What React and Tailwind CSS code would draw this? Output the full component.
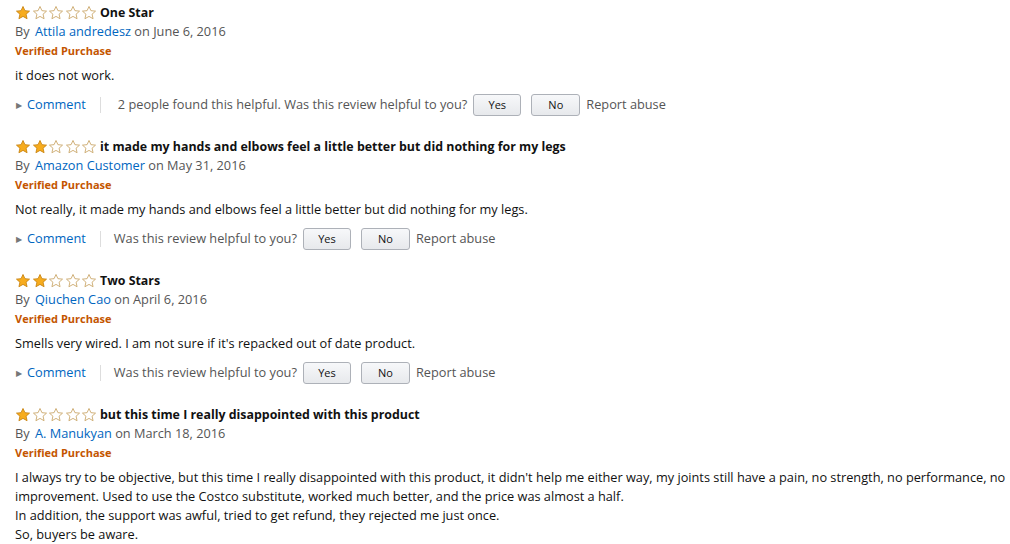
import React from "react";

const reviews = [
  {
    stars: 1,
    title: "One Star",
    author: "Attila andredesz",
    date: "June 6, 2016",
    body: ["it does not work."],
    helpful: "2 people found this helpful. Was this review helpful to you?",
    first: true,
  },
  {
    stars: 2,
    title: "it made my hands and elbows feel a little better but did nothing for my legs",
    author: "Amazon Customer",
    date: "May 31, 2016",
    body: ["Not really, it made my hands and elbows feel a little better but did nothing for my legs."],
    helpful: "Was this review helpful to you?",
  },
  {
    stars: 2,
    title: "Two Stars",
    author: "Qiuchen Cao",
    date: "April 6, 2016",
    body: ["Smells very wired. I am not sure if it's repacked out of date product."],
    helpful: "Was this review helpful to you?",
  },
  {
    stars: 1,
    title: "but this time I really disappointed with this product",
    author: "A. Manukyan",
    date: "March 18, 2016",
    body: [
      "I always try to be objective, but this time I really disappointed with this product, it didn't help me either way, my joints still have a pain, no strength, no performance, no improvement. Used to use the Costco substitute, worked much better, and the price was almost a half.",
      "In addition, the support was awful, tried to get refund, they rejected me just once.",
      "So, buyers be aware.",
    ],
    helpful: "Was this review helpful to you?",
  },
];

function Star({ filled }) {
  return (
    <svg width="16" height="16" viewBox="0 0 24 24" className="shrink-0">
      <path
        d="M12 2.2l2.9 6.3 6.9.7-5.2 4.6 1.5 6.8L12 17.1l-6.1 3.5 1.5-6.8-5.2-4.6 6.9-.7z"
        fill={filled ? "#f7ac1e" : "#ffffff"}
        stroke={filled ? "#c7820e" : "#c9a566"}
        strokeWidth="1.3"
        strokeLinejoin="round"
      />
    </svg>
  );
}

function Review({ review }) {
  return (
    <div className="pb-[18px]">
      <div className="flex items-center h-[18px] mt-[4px]">
        <div className="flex gap-[0.5px]">
          {[1, 2, 3, 4, 5].map((n) => (
            <Star key={n} filled={n <= review.stars} />
          ))}
        </div>
        <span className="ml-[3px] font-bold text-[12.4px] text-[#111]">{review.title}</span>
      </div>
      <div className="leading-[19px] text-[#555]">
        By <span className="text-[#0066c0] ml-[2px]">{review.author}</span> on {review.date}
      </div>
      <div className="leading-[20px] text-[11px] font-bold text-[#c45500]">Verified Purchase</div>
      <div className="mt-[5px] leading-[19px] text-[#111]">
        {review.body.map((p, i) => (
          <p key={i}>{p}</p>
        ))}
      </div>
      <div className="flex items-center h-[22px] mt-[9px] text-[#555]">
        <span className="text-[#777] text-[8px] ml-[1px] mr-[5px]">▶</span>
        <span className="text-[#0066c0]">Comment</span>
        <span className={"w-px h-[16px] bg-[#ddd] ml-[14px] " + (review.first ? "mr-[17px]" : "mr-[13px]")}></span>
        <span>{review.helpful}</span>
        <button className="ml-[6px] w-[48px] h-[22px] rounded-[3px] border border-[#adb1b8] bg-gradient-to-b from-[#f7f8fa] to-[#e7e9ec] text-[11px] text-[#111]">
          Yes
        </button>
        <button className="ml-[10px] w-[49px] h-[22px] rounded-[3px] border border-[#adb1b8] bg-gradient-to-b from-[#f7f8fa] to-[#e7e9ec] text-[11px] text-[#111]">
          No
        </button>
        <span className="ml-[6px]">Report abuse</span>
      </div>
    </div>
  );
}

export default function App() {
  return (
    <div
      className="w-[1010px] h-[544px] overflow-hidden bg-white pl-[15px] text-[12.75px]"
      style={{ fontFamily: "'Open Sans', 'Noto Sans', Arial, sans-serif" }}
    >
      {reviews.map((r, i) => (
        <Review key={i} review={r} />
      ))}
    </div>
  );
}
